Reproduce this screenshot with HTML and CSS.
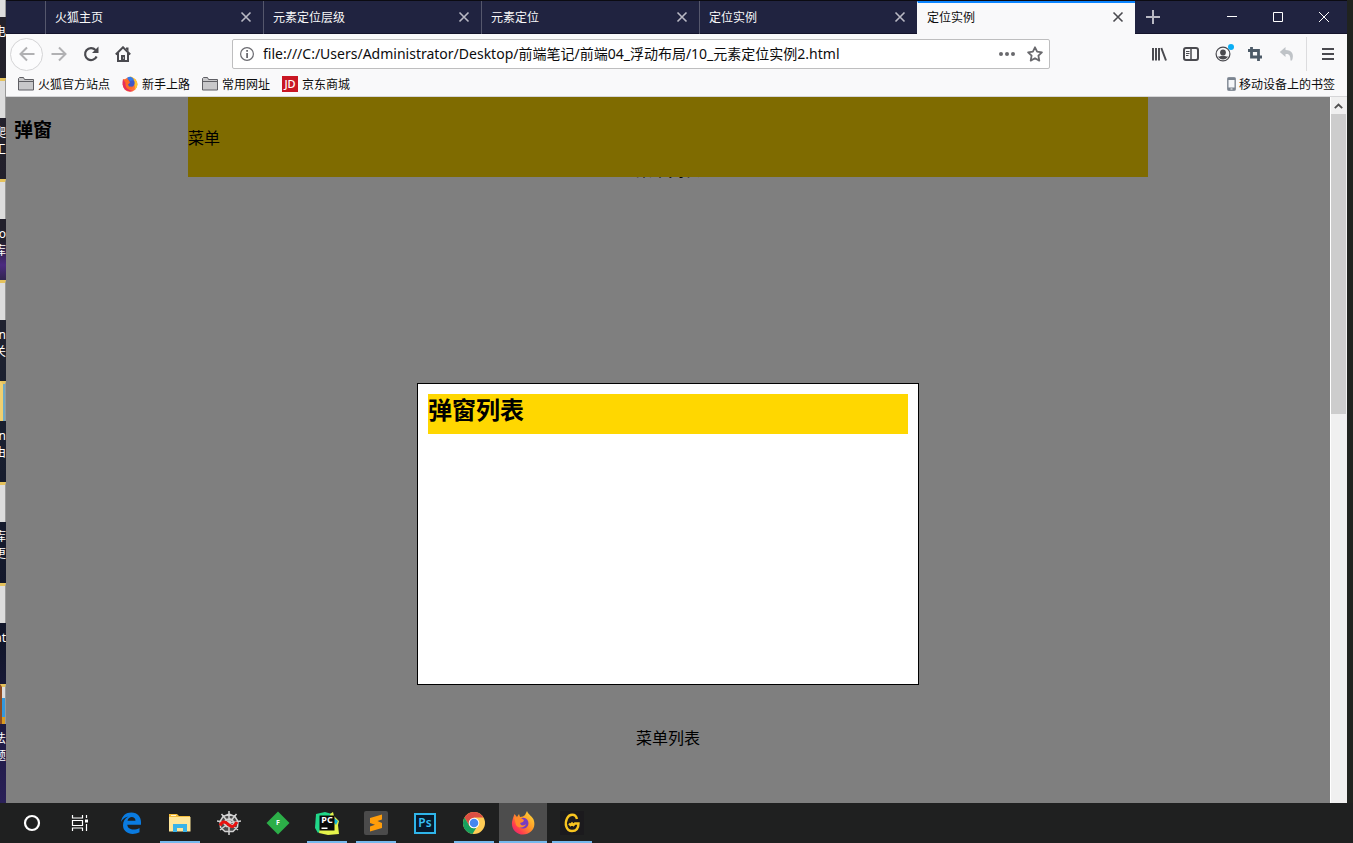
FILE: index.html
```html
<!DOCTYPE html>
<html lang="zh-CN">
<head>
    <meta charset="UTF-8">
    <meta name="viewport" content="width=device-width, initial-scale=1.0">
    <title>定位实例</title>
    <link rel="stylesheet" href="styles.css">
</head>
<body>
    <div class="desktop">
        <div class="desktop-icons">
            <div class="shortcut first"><i class="folder"></i><span>电</span></div>
            <div class="shortcut"><i class="folder"></i><span>爬</span><span>工</span></div>
            <div class="shortcut"><i class="folder"></i><span>o</span><span>库</span></div>
            <div class="shortcut"><i class="folder"></i><span>n</span><span>关</span></div>
            <div class="shortcut"><i class="folder blue"></i><span>n</span><span>由</span></div>
            <div class="shortcut"><i class="folder"></i><span>库</span><span>更</span></div>
            <div class="shortcut"><i class="folder"></i><span>at</span></div>
            <div class="shortcut"><i class="folder books"></i><span>法</span><span>题</span></div>
        </div>

        <div class="window">
            <div class="tabs">
                <div class="tab"><button class="tab-title">火狐主页</button><button class="close" aria-label="关闭"><svg width="12" height="12" viewBox="0 0 12 12"><path d="M1.5 1.5l9 9M10.5 1.5l-9 9"/></svg></button></div>
                <div class="tab"><button class="tab-title">元素定位层级</button><button class="close" aria-label="关闭"><svg width="12" height="12" viewBox="0 0 12 12"><path d="M1.5 1.5l9 9M10.5 1.5l-9 9"/></svg></button></div>
                <div class="tab"><button class="tab-title">元素定位</button><button class="close" aria-label="关闭"><svg width="12" height="12" viewBox="0 0 12 12"><path d="M1.5 1.5l9 9M10.5 1.5l-9 9"/></svg></button></div>
                <div class="tab"><button class="tab-title">定位实例</button><button class="close" aria-label="关闭"><svg width="12" height="12" viewBox="0 0 12 12"><path d="M1.5 1.5l9 9M10.5 1.5l-9 9"/></svg></button></div>
                <div class="tab active"><button class="tab-title">定位实例</button><button class="close" aria-label="关闭"><svg width="12" height="12" viewBox="0 0 12 12"><path d="M1.5 1.5l9 9M10.5 1.5l-9 9"/></svg></button></div>
                <button class="new-tab" aria-label="新标签页"><svg width="14" height="14" viewBox="0 0 14 14"><path d="M7 0v14M0 7h14" stroke="#b9b9c4" stroke-width="2"/></svg></button>
                <div class="window-controls">
                    <button aria-label="最小化"><svg width="10" height="10" viewBox="0 0 10 10"><path d="M0 4.5h10"/></svg></button>
                    <button aria-label="最大化"><svg width="10" height="10" viewBox="0 0 10 10"><path d="M.5.5h9v9h-9z"/></svg></button>
                    <button aria-label="关闭窗口"><svg width="10" height="10" viewBox="0 0 10 10"><path d="M0 0l10 10M10 0L0 10"/></svg></button>
                </div>
            </div>

            <div class="nav">
                <button class="tool back" aria-label="后退"><svg width="16" height="16" viewBox="0 0 16 16"><path d="M15.5 8H1.5M8 1.5L1.5 8 8 14.5" fill="none" stroke="#b1b1b3" stroke-width="2"/></svg></button>
                <button class="tool" aria-label="前进"><svg width="16" height="16" viewBox="0 0 16 16"><path d="M.5 8h14M8 1.5L14.5 8 8 14.5" fill="none" stroke="#b1b1b3" stroke-width="2"/></svg></button>
                <button class="tool" aria-label="刷新"><svg width="16" height="16" viewBox="0 0 16 16"><path d="M13.6 10.5A6 6 0 1 1 12.5 4" fill="none" stroke="#4a4a4f" stroke-width="2.2"/><path d="M15.5.5v6.5H9z" fill="#4a4a4f"/></svg></button>
                <button class="tool" aria-label="主页"><svg width="16" height="16" viewBox="0 0 16 16"><path d="M.8 8.500L8 1.300l7.200 7.200M3 7v8h10V7" fill="none" stroke="#4a4a4f" stroke-width="2"/><path d="M6 9h4v6H6zM11 1.500h2.500v4L11 3z" fill="#4a4a4f"/><path d="M8 11.500h1v1H8z" fill="#fff"/></svg></button>
                <div class="urlbar">
                    <svg width="14" height="14" viewBox="0 0 14 14"><circle cx="7" cy="7" r="6.4" fill="none" stroke="#6b6b70" stroke-width="1.2"/><path d="M6.200 6h1.800v5H6.200zM6.200 3h1.800v1.800H6.200z" fill="#6b6b70"/></svg>
                    <input type="text" aria-label="地址" value="file:///C:/Users/Administrator/Desktop/前端笔记/前端04_浮动布局/10_元素定位实例2.html">
                    <button aria-label="页面操作"><svg width="16" height="16" viewBox="0 0 16 16"><g fill="#69696d"><circle cx="2" cy="8" r="2"/><circle cx="8" cy="8" r="2"/><circle cx="14" cy="8" r="2"/></g></svg></button>
                    <button aria-label="添加书签"><svg width="16" height="16" viewBox="0 0 16 16"><path d="M8 1.300l2.100 4.400 4.800.6-3.500 3.400.9 4.900L8 12.200l-4.300 2.400.9-4.900L1.100 6.300l4.800-.6z" fill="none" stroke="#69696d" stroke-width="1.8" stroke-linejoin="round"/></svg></button>
                </div>
                <button class="tool" aria-label="书库"><svg width="16" height="16" viewBox="0 0 16 16"><path d="M2 2v12.500M5 2v12.500M8 2v12.500M10.300 2l4.700 12.500" stroke="#4a4a4f" stroke-width="2"/></svg></button>
                <button class="tool" aria-label="侧栏"><svg width="16" height="16" viewBox="0 0 16 16"><rect x="1" y="2" width="14" height="12" rx="2" fill="none" stroke="#4a4a4f" stroke-width="2"/><path d="M8 2v12" stroke="#4a4a4f" stroke-width="1.5"/><path d="M3 5.500h3.500M3 7.500h3.500M3 9.500h2.500" stroke="#4a4a4f"/></svg></button>
                <button class="tool account" aria-label="账户"><svg width="16" height="16" viewBox="0 0 16 16"><circle cx="8" cy="8" r="6.9" fill="none" stroke="#4a4a4f" stroke-width="1.2"/><circle cx="8" cy="6.400" r="2.900" fill="#4a4a4f"/><path d="M3 10.500c2 .5 3-1 5-1s3 1.500 5 1c-2 4-8 4-10 0z" fill="#4a4a4f"/></svg><span class="dot"></span></button>
                <button class="tool" aria-label="截图"><svg width="16" height="16" viewBox="0 0 16 16"><path d="M4.500 1v10H15M1 4.500h10.500V15" fill="none" stroke="#4c5a67" stroke-width="2.8"/></svg></button>
                <button class="tool" aria-label="撤销"><svg width="16" height="16" viewBox="0 0 16 16"><path d="M6.500 1L.8 6l5.700 5V8c3-.3 5 .5 5 6.500h1.500C15.500 8.500 13 4 6.500 4z" fill="#bfc3c7"/></svg></button>
                <span class="separator"></span>
                <button class="tool" aria-label="菜单"><svg width="16" height="16" viewBox="0 0 16 16"><path d="M2 3h12M2 8h12M2 13h12" stroke="#4a4a4f" stroke-width="2"/></svg></button>
            </div>

            <div class="bookmarks">
                <a href="#"><svg width="16" height="16" viewBox="0 0 16 16"><path d="M.5 14V2.500l1-1h4l1 2h9V14z" fill="#c8c8ca" stroke="#5f5f64"/><path d="M1 5.500h14" stroke="#5f5f64"/></svg>火狐官方站点</a>
                <a href="#"><svg width="16" height="16" viewBox="0 0 16 16"><circle cx="8" cy="8.500" r="7.300" fill="#ff7139"/><path d="M8 .5c4 .5 7.500 4 7.500 8-.3 2-1 4-3 5.500 1.500-5-1-7.500-4-9z" fill="#ffc42e"/><circle cx="8.500" cy="7" r="4.200" fill="#4058c8"/><path d="M1 3l3 .8 3 .5 1 2.500-2 1.700 1 2 4 .3-2 2.700-5-.5z" fill="#ff6a24"/><path d="M1 3c-1 4-.5 8 2 10.500 2 1.500 5 2.500 8 1.500-5-1-8-3-7.500-8z" fill="#e62e5c"/><path d="M5 2c3-2.500 6-.5 7 2l-4 1z" fill="#367be8"/></svg>新手上路</a>
                <a href="#"><svg width="16" height="16" viewBox="0 0 16 16"><path d="M.5 14V2.500l1-1h4l1 2h9V14z" fill="#c8c8ca" stroke="#5f5f64"/><path d="M1 5.500h14" stroke="#5f5f64"/></svg>常用网址</a>
                <a href="#"><span class="jd">JD</span>京东商城</a>
                <a href="#" class="mobile"><svg width="9" height="14" viewBox="0 0 9 14"><rect x=".5" y=".5" width="8" height="13" rx="1" fill="#7b8490" stroke="#8a929c"/><path d="M1.500 3h6v7.500h-6z" fill="#f5f7fa"/><path d="M3.500 12h2" stroke="#fff"/></svg>移动设备上的书签</a>
            </div>

            <div class="viewport">
                <div class="page">
                    <h3>弹窗</h3>
                    <p class="menu-list behind">菜单列表</p>
                    <p class="menu-list">菜单列表</p>
                    <div class="menu">菜单</div>
                    <div class="mask"></div>
                    <div class="pop">
                        <h2>弹窗列表</h2>
                    </div>
                </div>
                <div class="scrollbar">
                    <button aria-label="向上滚动"><svg width="9" height="6" viewBox="0 0 9 6"><path d="M.8 5.200l3.700-3.700 3.700 3.700" fill="none" stroke="#505050" stroke-width="1.8"/></svg></button>
                    <div class="thumb"></div>
                </div>
            </div>
        </div>
    </div>

    <div class="taskbar">
        <button class="task" aria-label="Cortana"><svg width="24" height="24" viewBox="0 0 24 24"><circle cx="11" cy="12" r="7" fill="none" stroke="#fff" stroke-width="2.2"/></svg></button>
        <button class="task" aria-label="任务视图"><svg width="24" height="24" viewBox="0 0 24 24"><g fill="none" stroke="#fff"><path d="M2.500 4v3h10V4M2.500 20v-3h10v3M2.500 9.500h10v5h-10zM16.500 4v3M16.500 13v7" stroke-width="1.2"/></g><path d="M15 8.500h3v3h-3z" fill="#fff"/></svg></button>
        <button class="task" aria-label="Edge"><svg width="24" height="24" viewBox="0 0 24 24"><path d="M2 11C3 4.500 7 1.500 12.300 1.500c6.500 0 9.700 4.700 9.700 9.500v2.800H8.300c.2 5 7.200 6 12.200 3.200v4.300c-8 3.700-16.500.7-16.500-7 0-4 2-7 5.500-8.800C5.500 6 3.500 8.300 2 11zm6.500-1.200h8c0-4.800-7-5-8 0z" fill="#0a7be0"/></svg></button>
        <button class="task open" aria-label="文件资源管理器"><svg width="24" height="24" viewBox="0 0 24 24"><path d="M1 3h8l2 2h11v15H1z" fill="#f5bd3b"/><path d="M3 4h5v1H3z" fill="#fff4cf"/><path d="M1 6h21.500v14.500H1z" fill="#ffe69a"/><path d="M5 21v-8h14v8h-4v-4H9v4z" fill="#39b3e8"/></svg></button>
        <button class="task" aria-label="Spyder"><svg width="24" height="24" viewBox="0 0 24 24"><circle cx="12" cy="12" r="9" fill="#4a4a4a"/><g fill="none" stroke="#d2d2d2" stroke-width="1.5"><path d="M12 3l6 2.500 3 5-.5 5.500-4.500 4.500H8l-4.500-4L3 10.500 6 5.500zM12 7.500l3.500 1.500 1.500 3.500-2.500 3h-5L7 12.500 8.500 9zM12 0v12L4.500 3M12 12l7.500-9M12 12L0 10M12 12l12-2M12 12L3 19M12 12l9 7M12 12v12"/></g><path d="M3 14.500c3-6 6-3 9-.5s5 2 8-3" fill="none" stroke="#e8110f" stroke-width="3"/></svg></button>
        <button class="task" aria-label="F"><svg width="24" height="24" viewBox="0 0 24 24"><path d="M12 .5L23.500 12 12 23.500.5 12z" fill="#2cae48"/></svg><span class="letter">F</span></button>
        <button class="task open" aria-label="PyCharm"><svg width="24" height="24" viewBox="0 0 24 24"><path d="M1 3l9-2 7 2-3 10-11 9-3-5z" fill="#21d789"/><path d="M15 3l3-2 1 4 5 5-1 4 1 9-11 1-9-2 1-5 13-2z" fill="#e5f34b"/><path d="M19 7l4 3-2 4-3-4z" fill="#12b6d5"/><path d="M4.500 4.500h15v15h-15z" fill="#080808"/><path d="M6.500 16.500h6V18h-6z" fill="#fff"/></svg><span class="letter pc">PC</span></button>
        <button class="task open" aria-label="Sublime Text"><svg width="24" height="24" viewBox="0 0 24 24"><rect width="24" height="24" rx="2" fill="#4b4b4b"/><path d="M18 3.500v5l-4.500 1.600 4.500 1.900v5L6 20.500v-5l5-1.700-5-1.800V7z" fill="#ff9d0a"/></svg></button>
        <button class="task" aria-label="Photoshop"><span class="ps">Ps</span></button>
        <button class="task open" aria-label="Chrome"><svg width="24" height="24" viewBox="0 0 24 24"><circle cx="12" cy="12" r="11" fill="#fc5"/><path d="M2.500 6.500A11 11 0 0 1 21.500 6.500H12L7.200 14.800z" fill="#db4f43"/><path d="M2.500 6.500l4.800 8.300c1.500 2.500 4.500 3 7 2L10.500 23A11 11 0 0 1 2.500 6.500z" fill="#17a05e"/><circle cx="12" cy="12" r="5.300" fill="#fff"/><circle cx="12" cy="12" r="4.300" fill="#4587ee"/></svg></button>
        <button class="task open current" aria-label="Firefox"><svg width="24" height="24" viewBox="0 0 24 24"><defs><linearGradient id="fox" x1="1" y1="0" x2="0" y2="1"><stop offset="0" stop-color="#ffe83d"/><stop offset=".45" stop-color="#ff9626"/><stop offset=".75" stop-color="#ff3c4f"/><stop offset="1" stop-color="#d91a86"/></linearGradient></defs><path d="M2 7l1.500-4L6 6l2-3 1 3c2 0 4-1 5-2L16 0c1 4 6 5 7 10 2 8-4 13.500-11 13.500S-1 17 1.500 9z" fill="url(#fox)"/><path d="M8 9c2-3 7-3 9 1 1.500 4-1 7-4 7.500-4 .5-7-3-6-6.500z" fill="#7a3cc0"/><path d="M3 6l7 1 3 2-1 2-3 1 1 2c2 1 4 0 5-1-1 4-7 5-10 1z" fill="#ff8b2a"/></svg></button>
        <button class="task open" aria-label="G"><svg width="24" height="24" viewBox="0 0 24 24"><rect width="24" height="24" fill="#1b1a1d"/><path d="M17 8C15.500 2.500 9.500 2.500 7 7.500s-1 12.500 5 12.500c5 0 6.500-3 6.500-7.500h-3.500l-1.500 1.500-1.500-1.500-1.500 1.500-1.500-1.500" fill="none" stroke="#f8c520" stroke-width="2.4"/></svg></button>
    </div>
</body>
</html>
```
FILE: styles.css
```css
* {
    box-sizing: border-box;
}

body {
    display: flex;
    flex-direction: column;
    height: 100vh;
    margin: 0;
    overflow: hidden;
    background: #1f2020;
    font-family: "Noto Sans", "Noto Sans CJK SC", sans-serif;
    font-size: 12px;
    color: #0c0c0d;
}

button {
    display: flex;
    align-items: center;
    justify-content: center;
    padding: 0;
    border: none;
    background: none;
    color: inherit;
    font: inherit;
}

svg {
    flex: none;
}

/* desktop strip behind the window */
.desktop {
    display: grid;
    grid-template-columns: 6px 1fr 6px;
    flex: 1;
    min-height: 0;
    background: linear-gradient(90deg, #1a1a2a 50%, #20231f 50%);
}

.desktop-icons {
    overflow: hidden;
    background: linear-gradient(#23212b, #22202c 30%, #4b2a80 33%, #222330 36%, #1a2030 50%, #11162a 80%, #2a2058);
    color: #fff;
}

.shortcut {
    display: flex;
    flex-direction: column;
    align-items: flex-end;
    height: 101px;
    line-height: 17px;
}

.shortcut.first {
    height: 79px;
    margin-top: -1px;
}

.folder {
    width: 6px;
    height: 40px;
    margin-bottom: 6px;
    border-top: 3px solid #e5c25c;
    border-right: 1px solid #999;
    background: #ddd;
}

.first .folder {
    height: 18px;
    border-top: none;
}

.folder.blue {
    border-left: 3px solid #efcf71;
    background: #6fa9c4;
}

.folder.books {
    border-left: 2px solid #8d4b22;
    background: linear-gradient(#ddd 30%, #3498dc 30%, #3498dc 80%, #d99b20 80%);
}

.window {
    display: flex;
    flex-direction: column;
    min-width: 0;
    border-top: 1px solid #0b0b12;
    background: #f9f9fa;
}

/* tabs */
.tabs {
    display: flex;
    height: 33px;
    padding-left: 39px;
    border-bottom: 1px solid #14142c;
    background: #202340;
    color: #f9f9fa;
}

.tab {
    display: flex;
    align-items: center;
    flex: 0 1 218px;
    height: 33px;
    padding: 0 11px 2px 9px;
    border-left: 1px solid #55576c;
}

.tab-title {
    flex: 1;
    justify-content: flex-start;
    height: 100%;
}

.close path {
    stroke: #b9b9c4;
    stroke-width: 1.6;
}

.tab.active {
    border-top: 2px solid #0a84ff;
    border-left-color: #f9f9fa;
    padding-bottom: 4px;
    background: #f9f9fa;
    color: #0c0c0d;
}

.active .close path {
    stroke: #4a4a4f;
}

.new-tab {
    width: 36px;
}

.window-controls {
    display: flex;
    margin-left: auto;
}

.window-controls button {
    width: 46px;
}

.window-controls path {
    fill: none;
    stroke: #fff;
}

/* toolbar */
.nav {
    display: flex;
    align-items: center;
    height: 40px;
    padding: 0 3px 0 4px;
}

.tool {
    position: relative;
    width: 32px;
    height: 32px;
}

.back {
    width: 33px;
    height: 33px;
    border: 1px solid #d4d4d6;
    border-radius: 50%;
    background: #fcfcfd;
}

.urlbar {
    display: flex;
    align-items: center;
    flex: 1;
    height: 30px;
    margin: 0 93px;
    padding: 0 6px 0 7px;
    border: 1px solid #bebebf;
    border-radius: 2px;
    background: #fff;
}

.urlbar input {
    flex: 1;
    min-width: 0;
    height: 26px;
    padding: 0 0 2px 9px;
    border: none;
    outline: none;
    background: none;
    color: #0c0c0d;
    font: inherit;
    font-size: 14px;
}

.urlbar button {
    width: 16px;
    margin-left: 12px;
}

.dot {
    position: absolute;
    top: 6px;
    right: 5px;
    width: 6px;
    height: 6px;
    border-radius: 50%;
    background: #0aaef5;
}

.separator {
    width: 1px;
    height: 34px;
    margin: 0 5px 0 3px;
    background: #dcdcde;
}

/* bookmarks */
.bookmarks {
    display: flex;
    align-items: center;
    gap: 12px;
    height: 23px;
    padding: 0 12px 2px;
    border-bottom: 1px solid #d6d6d8;
}

.bookmarks a {
    display: flex;
    align-items: center;
    gap: 4px;
    color: #0c0c0d;
    text-decoration: none;
    white-space: nowrap;
}

.bookmarks .mobile {
    gap: 3px;
    margin-left: auto;
}

.jd {
    width: 16px;
    height: 16px;
    background: #c91623;
    color: #fff;
    font-size: 11px;
    font-weight: 500;
    line-height: 16px;
    text-align: center;
}

/* page */
.viewport {
    display: flex;
    flex: 1;
    min-height: 0;
}

.page {
    position: relative;
    flex: 1;
    padding: 0 8px;
    overflow: hidden;
    background: #fff;
    color: #000;
    font-size: 16px;
}

.page h3 {
    margin: 20px 0 0;
    font-size: 19px;
    line-height: 27px;
}

.menu-list {
    margin: 544px 0 0;
    line-height: 24px;
    text-align: center;
}

.menu-list.behind {
    margin-top: 14px;
}

.menu {
    position: absolute;
    top: 0;
    left: 50%;
    width: 960px;
    height: 80px;
    margin-left: -480px;
    background: gold;
    line-height: 82px;
}

.mask {
    position: absolute;
    inset: 0;
    background: rgba(0, 0, 0, 0.5);
}

.pop {
    position: absolute;
    top: 286px;
    left: 50%;
    width: 502px;
    height: 302px;
    margin-left: -251px;
    padding: 10px;
    border: 1px solid #000;
    background: #fff;
}

.pop h2 {
    height: 40px;
    margin: 0;
    background: gold;
    font-size: 24px;
    line-height: 32px;
}

.scrollbar {
    width: 17px;
    padding-right: 1px;
    background: #f0f0f0;
    border-left: 1px solid #fff;
}

.scrollbar button {
    width: 100%;
    height: 17px;
}

.thumb {
    height: 300px;
    background: #cdcdcd;
}

/* taskbar */
.taskbar {
    display: flex;
    gap: 1px;
    height: 40px;
    padding-left: 9px;
    background: #1f2020;
}

.task {
    position: relative;
    width: 48px;
}

.task.open::after {
    content: "";
    position: absolute;
    bottom: 0;
    left: 4px;
    right: 4px;
    height: 2px;
    background: #76b9ed;
}

.task.current {
    background: #4d4d4d;
}

.task.current::after {
    left: 0;
    right: 0;
}

.letter {
    position: absolute;
    inset: 0;
    color: #fff;
    font-size: 7px;
    font-weight: bold;
    line-height: 40px;
    text-align: center;
}

.letter.pc {
    font-size: 9px;
    line-height: 34px;
}

.ps {
    width: 22px;
    height: 21px;
    border: 2px solid #2fb5ea;
    background: #071a2c;
    color: #36c0f5;
    font-size: 12px;
    font-weight: 600;
    line-height: 16px;
}
```
